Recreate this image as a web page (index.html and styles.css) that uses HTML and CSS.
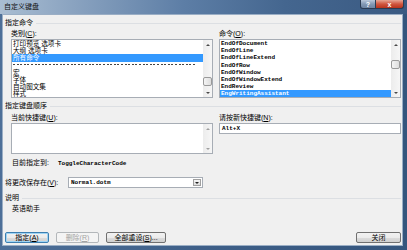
FILE: index.html
```html
<!DOCTYPE html>
<html lang="zh-CN">
<head>
<meta charset="utf-8">
<title>自定义键盘</title>
<link rel="stylesheet" href="styles.css">
</head>
<body>
<div class="window">
  <div class="titlebar">
    <span class="title">自定义键盘</span>
    <div class="caption-btns">
      <span class="cbtn help">?</span>
      <span class="cbtn close">x</span>
    </div>
  </div>
  <div class="client">
    <div class="group-head"><span>指定命令</span><i class="rule"></i></div>
    <div class="cols cols-top">
      <div class="col col-left">
        <div class="label">类别(<u>C</u>):</div>
        <div class="listbox list-tall">
          <ul class="items cjk">
            <li>打印预览 选项卡</li>
            <li>大纲 选项卡</li>
            <li class="sel">所有命令</li>
            <li class="sep"></li>
            <li>宏</li>
            <li>字体</li>
            <li>自动图文集</li>
            <li>样式</li>
          </ul>
          <div class="vscroll">
            <span class="arrow up"></span>
            <span class="thumb thumb-cat"></span>
            <span class="arrow down"></span>
          </div>
        </div>
      </div>
      <div class="col col-right">
        <div class="label">命令(<u>O</u>):</div>
        <div class="listbox list-tall">
          <ul class="items mono">
            <li>EndOfDocument</li>
            <li>EndOfLine</li>
            <li>EndOfLineExtend</li>
            <li>EndOfRow</li>
            <li>EndOfWindow</li>
            <li>EndOfWindowExtend</li>
            <li>EndReview</li>
            <li class="sel">EngWritingAssistant</li>
          </ul>
          <div class="vscroll">
            <span class="arrow up"></span>
            <span class="thumb thumb-cmd"></span>
            <span class="arrow down"></span>
          </div>
        </div>
      </div>
    </div>

    <div class="group-head head-2"><span>指定键盘顺序</span><i class="rule"></i></div>
    <div class="cols cols-keys">
      <div class="col col-left">
        <div class="label">当前快捷键(<u>U</u>):</div>
        <div class="listbox list-short">
          <ul class="items"></ul>
          <div class="vscroll dim">
            <span class="arrow up"></span>
            <span class="arrow down"></span>
          </div>
        </div>
      </div>
      <div class="col col-right">
        <div class="label">请按新快捷键(<u>N</u>):</div>
        <div class="textbox mono">Alt+X</div>
      </div>
    </div>
    <div class="current">目前指定到:<span class="mono value">ToggleCharacterCode</span></div>

    <div class="save-row">
      <span class="save-label">将更改保存在(<u>V</u>):</span>
      <div class="combo">
        <span class="mono combo-text">Normal.dotm</span>
        <span class="combo-btn"><i></i></span>
      </div>
    </div>

    <div class="group-head head-3"><span>说明</span><i class="rule"></i></div>
    <div class="desc">英语助手</div>

    <div class="buttons">
      <span class="btn btn-default btn-assign">指定(<u>A</u>)</span>
      <span class="btn btn-disabled btn-delete">删除(<u>R</u>)</span>
      <span class="btn btn-reset">全部重设(<u>S</u>)...</span>
      <span class="btn btn-close">关闭</span>
    </div>
  </div>
</div>
</body>
</html>
```

FILE: styles.css
```css
* { box-sizing: border-box; margin: 0; padding: 0; }
html, body { width: 407px; height: 250px; overflow: hidden; }
body {
  font-family: "Liberation Sans", "Noto Sans CJK SC", sans-serif;
  font-size: 7px;
  line-height: 8px;
  color: #000;
  background: #3b5c84;
}
u { text-decoration: underline; }
.mono { font-family: "Liberation Mono", monospace; font-size: 6px; font-weight: bold; }

.window {
  width: 407px;
  height: 250px;
  display: flex;
  flex-direction: column;
  background: linear-gradient(90deg, #4d6f98 0%, #3e5f88 50%, #34557d 100%);
}
.titlebar {
  height: 14px;
  flex: none;
  display: flex;
  justify-content: space-between;
  align-items: flex-start;
  background: linear-gradient(90deg, #a9bdd2 0%, #8aa3c0 18%, #5d7ea6 45%, #44668f 70%, #3a5a82 100%);
}
.title { padding: 3px 0 0 4px; line-height: 8px; color: #111; }
.caption-btns { display: flex; margin-right: 3px; }
.cbtn {
  height: 9px;
  display: flex;
  align-items: center;
  justify-content: center;
  color: #fff;
  font: bold 7px/7px "Liberation Sans", sans-serif;
  border: 1px solid #2a3b52;
  border-top: none;
}
.help { width: 16px; background: linear-gradient(#b9c8da, #8399b4 50%, #6d84a2); border-radius: 0 0 0 3px; }
.close { width: 28px; background: linear-gradient(#e7a593, #d0563f 50%, #b7331c); border-left: none; border-radius: 0 0 3px 0; }

.client {
  flex: 1;
  margin: 0 4px 4px 2px;
  background: #f0f0f0;
  border: 1px solid #9aaec5;
  padding: 0 1px 0 2px;
  display: flex;
  flex-direction: column;
}
.group-head { display: flex; align-items: center; height: 8px; margin-top: 4px; }
.group-head .rule { flex: 1; height: 1px; background: #dcdfe3; margin-left: 3px; }
.head-2 { margin-top: 4px; }
.head-3 { margin-top: 6px; }

.cols { display: flex; gap: 6px; padding-left: 6px; }
.cols-top { margin-top: 3px; }
.cols-keys { margin-top: 4px; }
.col-left { width: 202px; flex: none; }
.col-right { flex: 1; }
.label { height: 8px; margin-bottom: 1px; white-space: nowrap; }

.listbox { display: flex; border: 1px solid #a7adb5; background: #fff; }
.list-tall { height: 59px; }
.list-short { height: 31px; }
.items { flex: 1; list-style: none; overflow: hidden; }
.items li { height: 7.2px; line-height: 7.2px; padding-left: 1px; white-space: nowrap; }
.items.cjk li { font-size: 6.6px; }
.items li.sel { background: #3399ff; color: #fff; }
.items li.sep {
  background: repeating-linear-gradient(90deg, #444 0 2px, transparent 2px 3.6px) no-repeat 1px 2px / 184px 1px;
}

.vscroll {
  width: 9px;
  flex: none;
  display: flex;
  flex-direction: column;
  background: linear-gradient(90deg, #ececec, #f6f6f6);
}
.arrow { height: 9px; display: flex; align-items: center; justify-content: center; flex: none; }
.arrow::before { content: ""; border-left: 2px solid transparent; border-right: 2px solid transparent; }
.arrow.up::before { border-bottom: 2px solid #4a4a4a; }
.arrow.down { margin-top: auto; }
.arrow.down::before { border-top: 2px solid #4a4a4a; }
.vscroll.dim .arrow.up::before { border-bottom-color: #a0a0a0; }
.vscroll.dim .arrow.down::before { border-top-color: #a0a0a0; }
.thumb {
  height: 9px;
  flex: none;
  border: 1px solid #9a9a9a;
  border-radius: 2px;
  background: linear-gradient(90deg, #f4f4f4, #dedede);
}
.thumb-cat { margin-top: 28px; }
.thumb-cmd { margin-top: 11px; }

.textbox {
  height: 11px;
  border: 1px solid #a7adb5;
  background: #fff;
  padding-left: 2px;
  line-height: 9px;
}
.current { margin-top: 5px; padding-left: 7px; height: 8px; white-space: nowrap; }
.current .value { margin-left: 9px; }

.save-row { display: flex; align-items: center; margin-top: 10px; height: 11px; }
.save-label { width: 63px; white-space: nowrap; }
.combo {
  width: 135px;
  height: 11px;
  border: 1px solid #a7adb5;
  background: #fff;
  display: flex;
  align-items: center;
  justify-content: space-between;
  padding: 0 1px 0 2px;
}
.combo-text { line-height: 9px; }
.combo-btn {
  width: 8px;
  height: 7px;
  border: 1px solid #a0a0a0;
  background: linear-gradient(#f6f6f6, #dcdcdc);
  display: flex;
  align-items: center;
  justify-content: center;
}
.combo-btn i { border-left: 2px solid transparent; border-right: 2px solid transparent; border-top: 2px solid #222; }

.desc { margin-top: 3px; padding-left: 7px; height: 8px; }

.buttons { margin-top: auto; margin-bottom: 2px; display: flex; height: 11px; }
.btn {
  height: 11px;
  display: flex;
  align-items: center;
  justify-content: center;
  border: 1px solid #707070;
  border-radius: 2px;
  background: linear-gradient(#f2f2f2 0%, #ebebeb 50%, #dddddd 50%, #cfcfcf 100%);
  white-space: nowrap;
}
.btn-default { border-color: #3c7fb1; box-shadow: inset 0 0 0 1px #9fd4f4; }
.btn-disabled { border-color: #b3b7ba; background: #f4f4f4; color: #a3a3a3; }
.btn-assign { width: 44px; }
.btn-delete { width: 43px; margin-left: 7px; }
.btn-reset { width: 60px; margin-left: 7px; }
.btn-close { width: 45px; margin-left: auto; }
```
